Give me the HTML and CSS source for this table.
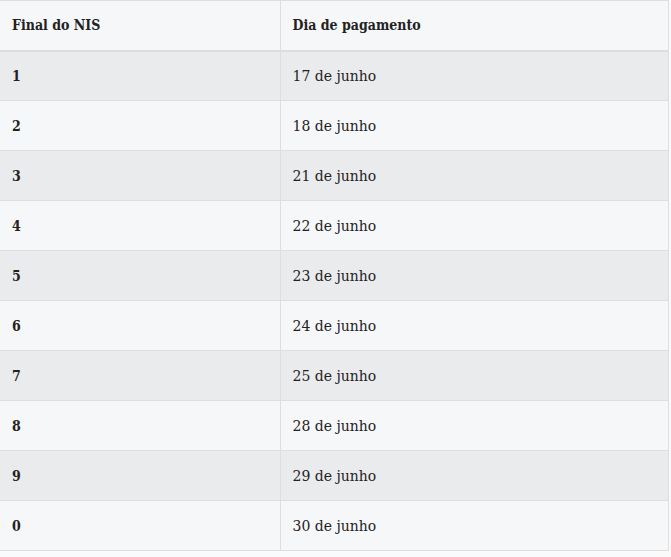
FILE: index.html
```
<!DOCTYPE html>
<html lang="pt">
<head>
<meta charset="utf-8">
<link rel="stylesheet" href="styles.css">
</head>
<body>
<table class="tbl">
  <thead>
    <tr><th class="c1">Final do NIS</th><th>Dia de pagamento</th></tr>
  </thead>
  <tbody>
    <tr><td class="c1">1</td><td>17 de junho</td></tr>
    <tr><td class="c1">2</td><td>18 de junho</td></tr>
    <tr><td class="c1">3</td><td>21 de junho</td></tr>
    <tr><td class="c1">4</td><td>22 de junho</td></tr>
    <tr><td class="c1">5</td><td>23 de junho</td></tr>
    <tr><td class="c1">6</td><td>24 de junho</td></tr>
    <tr><td class="c1">7</td><td>25 de junho</td></tr>
    <tr><td class="c1">8</td><td>28 de junho</td></tr>
    <tr><td class="c1">9</td><td>29 de junho</td></tr>
    <tr><td class="c1">0</td><td>30 de junho</td></tr>
  </tbody>
</table>
</body>
</html>
```
FILE: styles.css
```
html, body { margin: 0; padding: 0; background: #fafafa; }
.tbl {
  width: 669px;
  border-collapse: collapse;
  font-family: "DejaVu Serif", "Liberation Serif", serif;
  font-size: 14px;
  color: #222;
}
.tbl th, .tbl td {
  height: 50px;
  padding: 0 12px;
  text-align: left;
  border: 1px solid #dddee1;
  border-left: none;
  box-sizing: border-box;
}
.tbl th, .tbl td.c1 {
  font-family: "DejaVu Serif Condensed", "DejaVu Serif", serif;
  font-stretch: condensed;
  font-weight: bold;
}
.tbl th { background: #f6f7f9; border-bottom: 2px solid #dddee1; }
.tbl .c1 { width: 280px; }
.tbl tbody tr:nth-child(odd) td { background: #eaebed; }
.tbl tbody tr:nth-child(even) td { background: #f6f7f9; }
```
